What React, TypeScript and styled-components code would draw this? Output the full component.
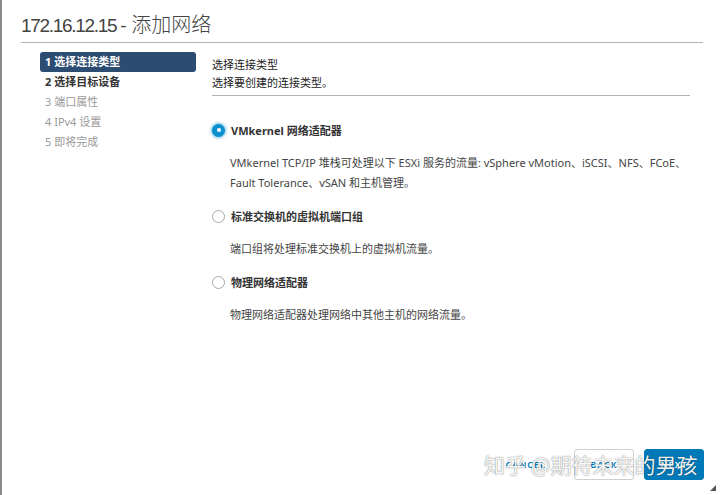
import React, { useState } from "react";
import styled, { createGlobalStyle } from "styled-components";

const GlobalStyle = createGlobalStyle`
  html, body {
    margin: 0;
    padding: 0;
    background: #ffffff;
  }
  body {
    font-family: "Noto Sans", "Noto Sans CJK SC", sans-serif;
    color: #313131;
  }
`;

const Dialog = styled.div`
  position: relative;
  width: 720px;
  height: 495px;
  box-sizing: border-box;
  border-left: 2px solid #8a8a8a;
  display: flex;
  flex-direction: column;
  overflow: hidden;
`;

const Header = styled.div`
  height: 43px;
  margin: 0 17px 0 19px;
  box-sizing: border-box;
  border-bottom: 1px solid #b3b3b3;
  display: flex;
  align-items: flex-end;
  padding-bottom: 3px;
`;

const Title = styled.h1`
  margin: 0;
  font-family: "Liberation Sans", "Noto Sans CJK SC", sans-serif;
  font-weight: 400;
  font-size: 20px;
  line-height: 26px;
  color: #444;
`;

const TitleHost = styled.span`
  font-size: 19px;
  letter-spacing: -1.3px;
`;

const TitleCjk = styled.span`
  margin-left: 6px;
  font-family: "Noto Sans CJK SC", sans-serif;
  font-weight: 300;
  font-size: 20px;
`;

const Body = styled.div`
  display: grid;
  grid-template-columns: 156px 1fr;
  column-gap: 16px;
  padding: 9px 30px 0 38px;
`;

const Nav = styled.ul`
  list-style: none;
  margin: 0;
  padding: 0;
`;

const NavItem = styled.li<{ $state: "active" | "done" | "todo" }>`
  height: 20px;
  line-height: 20px;
  padding-left: 5px;
  border-radius: 3px;
  font-size: 11px;
  font-weight: ${(p) => (p.$state === "todo" ? 400 : 700)};
  background: ${(p) => (p.$state === "active" ? "#2d4c71" : "transparent")};
  color: ${(p) =>
    p.$state === "active" ? "#ffffff" : p.$state === "done" ? "#333" : "#9a9a9a"};
`;

const Content = styled.div`
  display: flex;
  flex-direction: column;
  width: 478px;
`;

const StepHead = styled.div`
  padding-top: 4px;
  padding-bottom: 3px;
  border-bottom: 1px solid #b3b3b3;
  font-size: 11px;
  line-height: 18px;
  color: #222;
`;

const Options = styled.div`
  display: flex;
  flex-direction: column;
  padding-top: 24px;
`;

const Option = styled.div`
  display: flex;
  flex-direction: column;
  margin-bottom: 13px;
`;

const OptionLabel = styled.label`
  display: flex;
  align-items: center;
  gap: 6px;
  height: 20px;
  font-size: 11px;
  font-weight: 700;
  color: #333;
  cursor: pointer;
`;

const Radio = styled.span<{ $checked: boolean }>`
  width: 13px;
  height: 13px;
  border-radius: 50%;
  box-sizing: border-box;
  flex: none;
  display: flex;
  align-items: center;
  justify-content: center;
  background: ${(p) => (p.$checked ? "#0a8fd0" : "#fff")};
  border: ${(p) => (p.$checked ? "none" : "1px solid #a8a8a8")};
  box-shadow: ${(p) => (p.$checked ? "0 0 3px 1px rgba(0,140,210,0.55)" : "none")};

  &::after {
    content: "";
    width: 4px;
    height: 4px;
    border-radius: 50%;
    background: #fff;
    display: ${(p) => (p.$checked ? "block" : "none")};
  }
`;

const Desc = styled.p`
  margin: 13px 0 0 18px;
  font-size: 11px;
  line-height: 20px;
  color: #444;
`;

const Footer = styled.div`
  margin-top: auto;
  display: flex;
  justify-content: flex-end;
  align-items: center;
  gap: 10px;
  padding: 0 16px 15px 0;
`;

const Button = styled.button<{ $variant: "link" | "outline" | "primary" }>`
  height: 31px;
  box-sizing: border-box;
  border-radius: 3px;
  font-family: "Noto Sans", sans-serif;
  font-size: 9px;
  font-weight: 600;
  letter-spacing: 1px;
  text-transform: uppercase;
  padding: 0 ${(p) => (p.$variant === "link" ? "8px" : "12px")};
  min-width: ${(p) => (p.$variant === "link" ? "0" : "60px")};
  margin-right: ${(p) => (p.$variant === "link" ? "10px" : "0")};
  background: ${(p) => (p.$variant === "primary" ? "#0079b8" : "#fff")};
  color: ${(p) => (p.$variant === "primary" ? "#fff" : "#0079b8")};
  border: ${(p) =>
    p.$variant === "outline"
      ? "1px solid #cfcfcf"
      : p.$variant === "primary"
      ? "1px solid #0079b8"
      : "none"};
`;

const Watermark = styled.div`
  position: absolute;
  left: 482px;
  top: 449px;
  font-family: "Noto Sans CJK SC", sans-serif;
  font-size: 21px;
  line-height: 30px;
  color: rgba(255, 255, 255, 0.95);
  text-shadow: 0 0 1px rgba(0, 0, 0, 0.5), 0 0 2px rgba(0, 0, 0, 0.2);
  white-space: nowrap;
  pointer-events: none;
`;

const ResizeGrip = styled.div`
  position: absolute;
  right: 4px;
  bottom: 4px;
  width: 0;
  height: 0;
  border-left: 6px solid transparent;
  border-bottom: 6px solid #555;
`;

const steps: { label: string; state: "active" | "done" | "todo" }[] = [
  { label: "1 选择连接类型", state: "active" },
  { label: "2 选择目标设备", state: "done" },
  { label: "3 端口属性", state: "todo" },
  { label: "4 IPv4 设置", state: "todo" },
  { label: "5 即将完成", state: "todo" },
];

const options = [
  {
    id: "vmk",
    label: "VMkernel 网络适配器",
    desc: [
      "VMkernel TCP/IP 堆栈可处理以下 ESXi 服务的流量: vSphere vMotion、iSCSI、NFS、FCoE、",
      "Fault Tolerance、vSAN 和主机管理。",
    ],
  },
  {
    id: "vm",
    label: "标准交换机的虚拟机端口组",
    desc: ["端口组将处理标准交换机上的虚拟机流量。"],
  },
  {
    id: "pnic",
    label: "物理网络适配器",
    desc: ["物理网络适配器处理网络中其他主机的网络流量。"],
  },
];

const App = () => {
  const [selected, setSelected] = useState("vmk");

  return (
    <>
      <GlobalStyle />
      <Dialog>
        <Header>
          <Title>
            <TitleHost>172.16.12.15 -</TitleHost>
            <TitleCjk>添加网络</TitleCjk>
          </Title>
        </Header>
        <Body>
          <Nav>
            {steps.map((s) => (
              <NavItem key={s.label} $state={s.state}>
                {s.label}
              </NavItem>
            ))}
          </Nav>
          <Content>
            <StepHead>
              <div>选择连接类型</div>
              <div>选择要创建的连接类型。</div>
            </StepHead>
            <Options>
              {options.map((o) => (
                <Option key={o.id}>
                  <OptionLabel onClick={() => setSelected(o.id)}>
                    <Radio $checked={selected === o.id} />
                    {o.label}
                  </OptionLabel>
                  <Desc>
                    {o.desc.map((line, i) => (
                      <React.Fragment key={i}>
                        {line}
                        {i < o.desc.length - 1 && <br />}
                      </React.Fragment>
                    ))}
                  </Desc>
                </Option>
              ))}
            </Options>
          </Content>
        </Body>
        <Footer>
          <Button $variant="link">Cancel</Button>
          <Button $variant="outline">Back</Button>
          <Button $variant="primary">Next</Button>
        </Footer>
        <Watermark>知乎 @期待未来的男孩</Watermark>
        <ResizeGrip />
      </Dialog>
    </>
  );
};

export default App;
